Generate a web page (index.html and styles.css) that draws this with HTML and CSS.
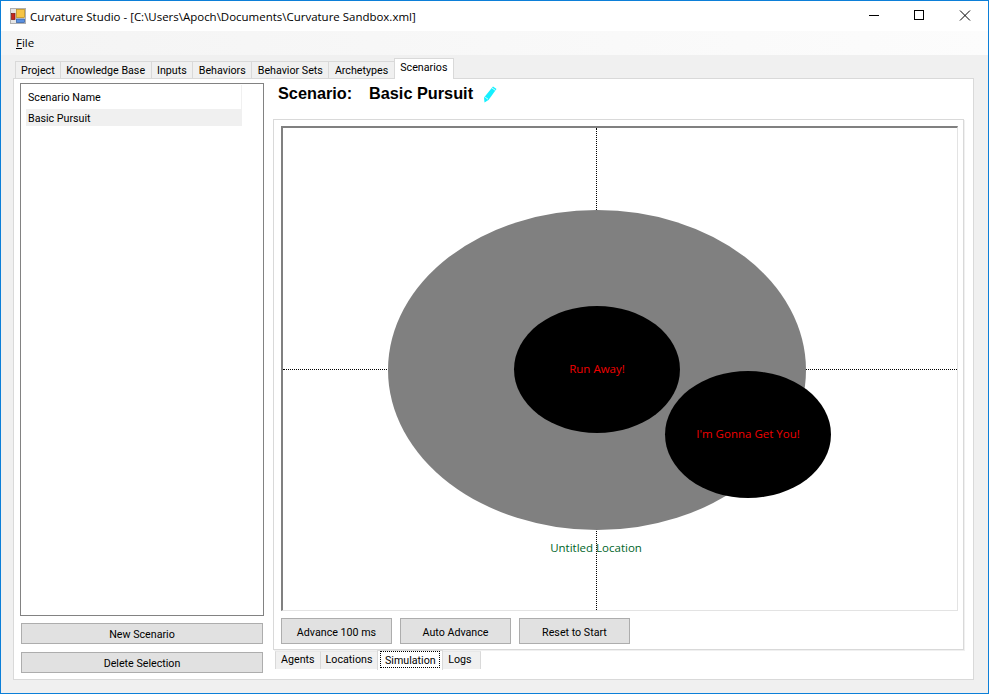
FILE: index.html
```html
<!DOCTYPE html>
<html lang="en">
<head>
  <meta charset="UTF-8">
  <title>Curvature Studio</title>
  <link rel="stylesheet" href="styles.css">
</head>
<body>
  <div class="window">
    <!-- Title bar -->
    <div class="titlebar">
      <svg class="app-icon" width="16" height="16" viewBox="0 0 16 16">
        <rect x="0.5" y="0.5" width="15" height="15" fill="#e4e4e4" stroke="#b0b0b0"/>
        <rect x="6.5" y="1.5" width="8" height="8" fill="#f6c445" stroke="#b98a10" stroke-width="0.7"/>
        <rect x="1.5" y="5.5" width="3.5" height="6" fill="#c8261c" stroke="#7a1610" stroke-width="0.7"/>
        <rect x="6.5" y="11" width="8" height="3.5" fill="#5a90e0" stroke="#2d5aa0" stroke-width="0.7"/>
      </svg>
      <span class="title-text">Curvature Studio - [C:\Users\Apoch\Documents\Curvature Sandbox.xml]</span>
      <div class="win-controls">
        <svg width="12" height="12" viewBox="0 0 12 12"><path d="M2 5.5H12" stroke="#000" fill="none"/></svg>
        <svg width="12" height="12" viewBox="0 0 12 12"><rect x="1.5" y="0.5" width="9" height="9" stroke="#000" fill="none"/></svg>
        <svg width="12" height="12" viewBox="0 0 12 12"><path d="M1 0.5L11 10.5M11 0.5L1 10.5" stroke="#000" fill="none"/></svg>
      </div>
    </div>

    <!-- Menu -->
    <div class="menubar"><span class="menu-item"><u>F</u>ile</span></div>

    <div class="client">
      <div class="tabstrip main-tabs">
        <div class="tab">Project</div>
        <div class="tab">Knowledge Base</div>
        <div class="tab">Inputs</div>
        <div class="tab">Behaviors</div>
        <div class="tab">Behavior Sets</div>
        <div class="tab">Archetypes</div>
        <div class="tab active">Scenarios</div>
      </div>

      <div class="panel">
        <!-- Scenario list -->
        <div class="left-col">
          <div class="listbox">
            <div class="list-head">Scenario Name</div>
            <div class="list-row selected">Basic Pursuit</div>
          </div>
          <button class="btn wide first">New Scenario</button>
          <button class="btn wide">Delete Selection</button>
        </div>

        <div class="right-col">
          <div class="scenario-head">
            <span class="scenario-label">Scenario:</span>
            <span class="scenario-name">Basic Pursuit</span>
            <svg class="pencil" width="14" height="17" viewBox="0 0 14 17">
              <path d="M10 0.5L13.5 3L5.5 14L1.5 16.5L1 11.5Z" fill="#14f0ff"/>
              <path d="M2.2 11.2L5 13.2M9 2L12.4 4.4" stroke="#fff" stroke-width="0.8" fill="none"/>
            </svg>
          </div>

          <div class="group">
            <div class="canvas">
              <div class="axis-v"></div>
              <div class="axis-h"></div>
              <div class="blob location"></div>
              <div class="loc-label">Untitled Location</div>
              <div class="blob agent agent-a">Run Away!</div>
              <div class="blob agent agent-b">I'm Gonna Get You!</div>
            </div>
            <div class="sim-buttons">
              <button class="btn sim">Advance 100 ms</button>
              <button class="btn sim">Auto Advance</button>
              <button class="btn sim">Reset to Start</button>
            </div>
          </div>

          <div class="tabstrip sub-tabs">
            <div class="tab">Agents</div>
            <div class="tab">Locations</div>
            <div class="tab active"><span class="focus">Simulation</span></div>
            <div class="tab last">Logs</div>
          </div>
        </div>
      </div>
    </div>
  </div>
</body>
</html>
```

FILE: styles.css
```css
* {
  box-sizing: border-box;
}

html, body {
  margin: 0;
  padding: 0;
}

body {
  font-family: Roboto, "Liberation Sans", sans-serif;
  font-size: 10.7px;
  color: #000;
  background: #f0f0f0;
}

.window {
  width: 989px;
  height: 694px;
  border: 1px solid #0c7fd8;
  background: #f0f0f0;
  overflow: hidden;
}

/* title bar */
.titlebar {
  height: 30px;
  background: #fff;
  display: flex;
  align-items: center;
  padding-left: 9px;
}

.app-icon {
  margin-right: 4px;
}

.title-text {
  font-family: "Open Sans", sans-serif;
  font-size: 11.48px;
}

.win-controls {
  margin-left: auto;
  display: flex;
  gap: 34px;
  padding-right: 17px;
}

/* menu */
.menubar {
  height: 24px;
  background: linear-gradient(to right, #f4f4f4, #fcfcfc);
  padding: 4px 0 0 15px;
  font-family: "Open Sans", sans-serif;
  font-size: 11.5px;
}

.client {
  padding: 3px 0 0 12px;
}

/* tabs */
.tabstrip {
  display: flex;
}

.main-tabs {
  height: 20px;
  padding-left: 2px;
  align-items: flex-end;
  position: relative;
  z-index: 1;
}

.tab {
  height: 17px;
  line-height: 17px;
  padding: 0 5.5px;
  background: #f0f0f0;
  border: 1px solid #d9d9d9;
  border-left: none;
  border-bottom: none;
  white-space: nowrap;
}

.tab:first-child {
  border-left: 1px solid #d9d9d9;
  padding: 0 5px;
}

.tab.active {
  height: 21px;
  margin-bottom: -1px;
  background: #fff;
  border-left: 1px solid #d9d9d9;
  margin-left: -1px;
  line-height: 18px;
}

.panel {
  width: 961px;
  height: 602px;
  background: #fff;
  border: 1px solid #d9d9d9;
  display: flex;
  padding: 4px 0 0 6px;
}

/* left column */
.left-col {
  width: 244px;
  margin-right: 9px;
}

.listbox {
  height: 533px;
  border: 1px solid #828282;
  padding: 1px 21px 0 5px;
}

.list-head {
  height: 24px;
  line-height: 26px;
  padding-left: 2px;
  border-right: 1px solid #f0f0f0;
}

.list-row {
  height: 17px;
  line-height: 19px;
  padding-left: 2px;
}

.list-row.selected {
  background: #f0f0f0;
}

.btn {
  display: block;
  font: inherit;
  color: #000;
  background: #e1e1e1;
  border: 1px solid #adadad;
  padding: 1px 0 0;
}

.btn.wide {
  width: 242px;
  height: 21px;
  margin: 8px 0 0 1px;
}

.btn.wide.first {
  margin-top: 7px;
}

/* right column */
.right-col {
  width: 692px;
}

.scenario-head {
  height: 36px;
  display: flex;
  align-items: flex-start;
  padding: 1px 0 0 5px;
  font-family: "Liberation Sans", sans-serif;
  font-size: 16.3px;
  font-weight: bold;
}

.scenario-label {
  width: 91px;
}

.pencil {
  margin: 2px 0 0 10px;
}

.group {
  width: 691px;
  height: 531px;
  border: 1px solid #d9d9d9;
  box-shadow: 1px 1px 0 #f0f0f0;
  padding: 6px 5px 0 7px;
}

.canvas {
  position: relative;
  width: 677px;
  height: 485px;
  background: #fff;
  border: 1px solid #e3e3e3;
  border-top: 2px solid #808080;
  border-left: 2px solid #808080;
  overflow: hidden;
}

.axis-v {
  position: absolute;
  left: 313px;
  top: 0;
  bottom: 0;
  border-left: 1px dotted #000;
}

.axis-h {
  position: absolute;
  left: 0;
  right: 0;
  top: 241px;
  border-top: 1px dotted #000;
}

.blob {
  position: absolute;
  border-radius: 50%;
}

.location {
  left: 105px;
  top: 82px;
  width: 418px;
  height: 320px;
  background: #808080;
}

.agent {
  width: 166px;
  height: 127px;
  background: #000;
  color: #f00000;
  font-family: "Open Sans", sans-serif;
  font-size: 11.5px;
  display: flex;
  align-items: center;
  justify-content: center;
  padding-bottom: 2px;
}

.agent-a {
  left: 231px;
  top: 178px;
}

.agent-b {
  left: 382px;
  top: 243px;
}

.loc-label {
  position: absolute;
  left: 213px;
  width: 200px;
  top: 412px;
  text-align: center;
  font-family: "Open Sans", sans-serif;
  font-size: 11.5px;
  color: #006428;
}

.sim-buttons {
  display: flex;
  gap: 8px;
  margin-top: 7px;
}

.btn.sim {
  width: 111px;
  height: 26px;
  padding-top: 2px;
}

/* bottom tabs */
.sub-tabs {
  height: 20px;
  padding: 1px 0 0 2px;
  align-items: flex-start;
}

.sub-tabs .tab {
  height: 18px;
  line-height: 16px;
  padding: 0 5px;
  border-top-color: #e8e8e8;
}

.sub-tabs .tab.last {
  padding-right: 8px;
}

.sub-tabs .tab.active {
  height: 20px;
  margin: -1px 0 0 -1px;
  padding: 0 2px;
  border-top-color: #d9d9d9;
}

.focus {
  display: block;
  padding: 2px 3.5px 0;
  border: 1px dotted #000;
  height: 17px;
  line-height: 14px;
}
```
